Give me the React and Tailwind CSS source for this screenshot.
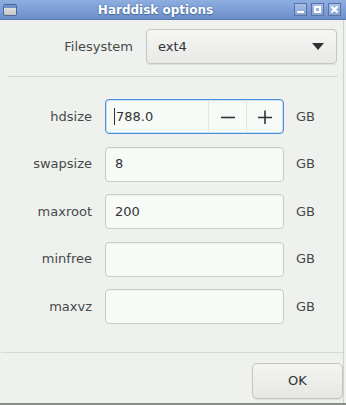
import React from "react";

const font = { fontFamily: '"DejaVu Sans", "Liberation Sans", sans-serif' };

function Entry({ value }) {
  return (
    <div className="h-[35px] w-[179px] rounded-[4px] border border-[#c9cbc6] bg-[#f8faf7] flex items-center px-[9px] text-[13px] text-[#2e3436] shadow-[inset_0_1px_0_rgba(0,0,0,0.03)]">
      {value}
    </div>
  );
}

function Row({ label, children }) {
  return (
    <div className="flex items-center h-[35px]">
      <div className="w-[92px] text-right text-[13px] text-[#454a48]">{label}</div>
      <div className="ml-[13px]">{children}</div>
      <div className="ml-[12px] text-[13px] text-[#454a48]">GB</div>
    </div>
  );
}

export default function App() {
  return (
    <div className="w-[346px] h-[405px] bg-[#eff1ee] flex flex-col overflow-hidden" style={font}>
      {/* title bar */}
      <div className="h-[20px] flex items-center bg-gradient-to-b from-[#8eaee0] to-[#6d90cb] border-b border-[#5b79ad] relative">
        <div className="ml-[3px] w-[14px] h-[12px] rounded-[2px] border border-[#4d6697] bg-gradient-to-b from-[#e9e9e9] to-[#c5c5c5] overflow-hidden">
          <div className="h-[3px] bg-[#6d8fca]" />
        </div>
        <div className="flex-1 text-center text-[12px] font-bold text-white [text-shadow:0_0_2px_#4a6aa0,0_1px_1px_#4a6aa0]">
          Harddisk options
        </div>
        <div className="flex gap-[4px] mr-[5px]">
          <div className="w-[13px] h-[13px] border border-[#5874a6] bg-gradient-to-b from-[#a7bfe6] to-[#86a4d6] flex items-end justify-center pb-[2px]">
            <div className="w-[7px] h-[2px] bg-white" />
          </div>
          <div className="w-[13px] h-[13px] border border-[#5874a6] bg-gradient-to-b from-[#a7bfe6] to-[#86a4d6] flex items-center justify-center">
            <div className="w-[7px] h-[7px] border-[2px] border-white" />
          </div>
          <div className="w-[13px] h-[13px] border border-[#5874a6] bg-gradient-to-b from-[#a7bfe6] to-[#86a4d6] flex items-center justify-center">
            <svg width="9" height="9" viewBox="0 0 9 9">
              <path d="M1.5 1.5 L7.5 7.5 M7.5 1.5 L1.5 7.5" stroke="white" strokeWidth="2.2" />
            </svg>
          </div>
        </div>
      </div>

      <div className="flex-1 flex">
        <div className="w-[343px] flex flex-col">
          {/* filesystem */}
          <div className="flex items-center mt-[9px] h-[35px]">
            <div className="w-[133px] text-right text-[13px] text-[#454a48]">Filesystem</div>
            <div className="ml-[13px] w-[191px] h-[35px] rounded-[4px] border border-[#c4c6c1] bg-gradient-to-b from-[#f6f6f3] to-[#e8e9e6] shadow-[0_1px_1px_rgba(0,0,0,0.08)] flex items-center pl-[11px] pr-[12px] text-[13px] text-[#2e3436]">
              <span className="flex-1">ext4</span>
              <svg width="12" height="7" viewBox="0 0 12 7">
                <path d="M0 0 L12 0 L6 7 Z" fill="#2e3436" />
              </svg>
            </div>
          </div>
          <div className="mt-[12px] ml-[7px] mr-[5px] h-px bg-[#d7d9d5]" />

          <div className="flex flex-col gap-[12.5px] mt-[22px]">
            <Row label="hdsize">
              <div className="h-[35px] w-[179px] rounded-[4px] border border-[#4a90d9] bg-[#f8faf7] flex items-stretch text-[13px] text-[#2e3436] shadow-[inset_0_0_0_1px_rgba(74,144,217,0.25)]">
                <div className="flex-1 flex items-center pl-[8px]">
                  <span className="w-px h-[17px] bg-[#2e3436] mr-px" />
                  788.0
                </div>
                <div className="w-[38px] border-l border-[#e2e4e0] flex items-center justify-center">
                  <svg width="14" height="14" viewBox="0 0 14 14">
                    <path d="M0 7.5 H14" stroke="#2e3436" strokeWidth="1.6" />
                  </svg>
                </div>
                <div className="w-[37px] border-l border-[#e2e4e0] flex items-center justify-center">
                  <svg width="14" height="14" viewBox="0 0 14 14">
                    <path d="M0 7.5 H14 M7 0.5 V14" stroke="#2e3436" strokeWidth="1.6" />
                  </svg>
                </div>
              </div>
            </Row>
            <Row label="swapsize">
              <Entry value="8" />
            </Row>
            <Row label="maxroot">
              <Entry value="200" />
            </Row>
            <Row label="minfree">
              <Entry value="" />
            </Row>
            <Row label="maxvz">
              <Entry value="" />
            </Row>
          </div>

          <div className="mt-[28px] ml-[1px] h-px bg-[#d7d9d5]" />
          <div className="flex justify-end mt-[10px]">
            <div className="w-[91px] h-[36px] rounded-[5px] border border-[#c4c6c1] bg-gradient-to-b from-[#f4f4f1] to-[#e6e7e4] shadow-[0_1px_1px_rgba(0,0,0,0.08)] flex items-center justify-center text-[13px] text-[#2e3436]">
              OK
            </div>
          </div>
        </div>
        <div className="w-px bg-[#d0d2ce]" />
      </div>
      <div className="h-[2px] bg-[#8a8c88]" />
    </div>
  );
}
